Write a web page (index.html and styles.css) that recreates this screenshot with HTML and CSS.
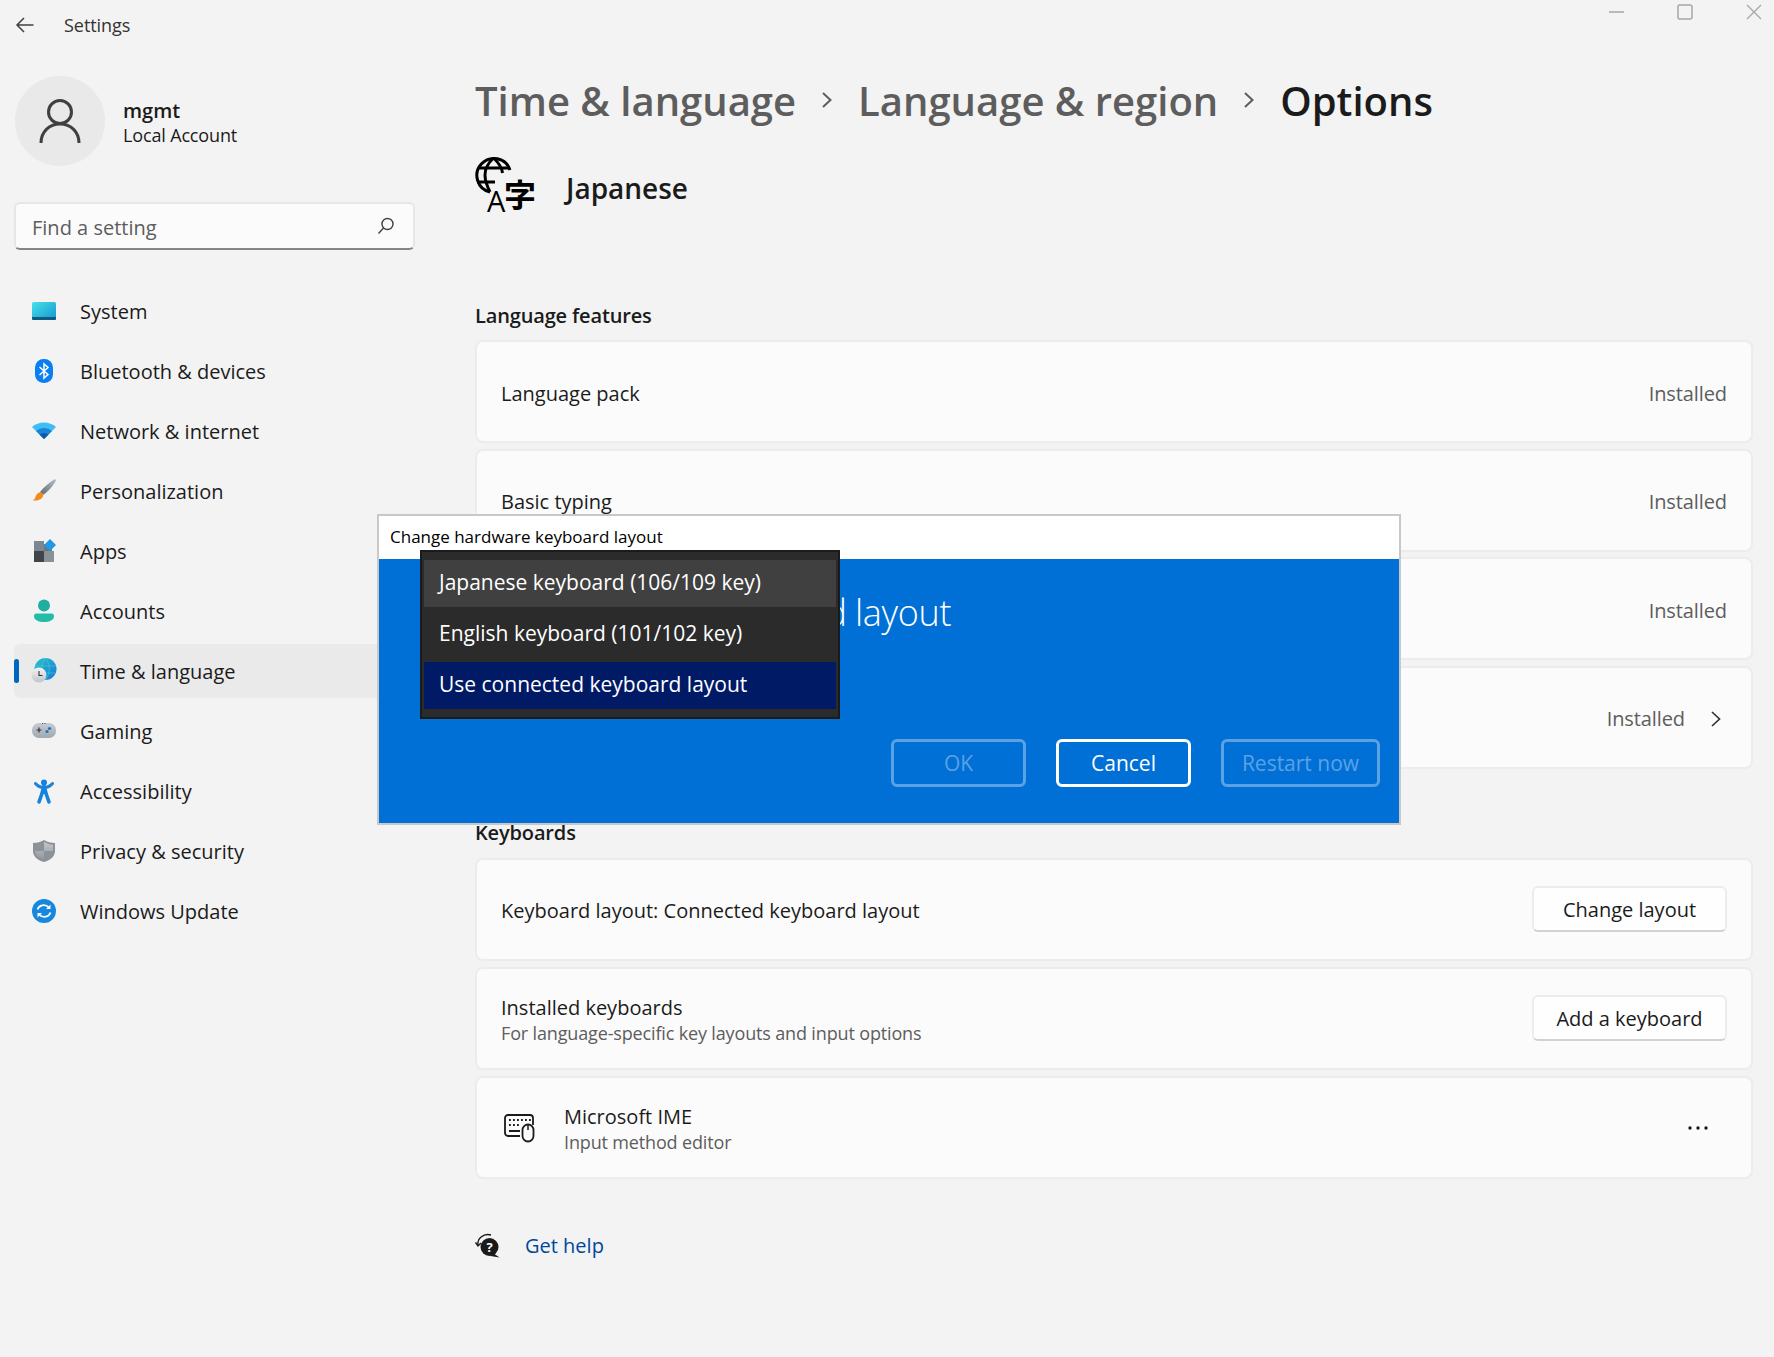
FILE: index.html
```html
<!DOCTYPE html>
<html lang="en">
<head>
    <meta charset="UTF-8">
    <title>Settings</title>
    <link rel="stylesheet" href="styles.css">
</head>
<body>
    <div class="window">
        <header class="titlebar">
            <svg class="back-icon" width="20" height="18" viewBox="0 0 20 18"><path d="M18.5 9H2M9 2 2 9l7 7" fill="none" stroke="#404040" stroke-width="1.5"/></svg>
            <span class="app-title">Settings</span>
            <div class="window-controls">
                <svg width="16" height="16" viewBox="0 0 16 16"><path d="M1 8h15" stroke="#a6a6a6" stroke-width="1.5"/></svg>
                <svg width="16" height="16" viewBox="0 0 16 16"><rect x="1" y="1" width="14" height="14" rx="2" fill="none" stroke="#a6a6a6" stroke-width="1.5"/></svg>
                <svg width="16" height="16" viewBox="0 0 16 16"><path d="M1 1l14 14M15 1 1 15" stroke="#a6a6a6" stroke-width="1.3"/></svg>
            </div>
        </header>

        <div class="app">
            <aside class="sidebar">
                <div class="profile">
                    <div class="avatar">
                        <svg width="44" height="48" viewBox="0 0 44 48"><circle cx="22" cy="15" r="11.5" fill="none" stroke="#404040" stroke-width="3"/><path d="M3 46c0-11 8-19 19-19s19 8 19 19" fill="none" stroke="#404040" stroke-width="3"/></svg>
                    </div>
                    <div class="profile-text">
                        <div class="profile-name">mgmt</div>
                        <div class="profile-type">Local Account</div>
                    </div>
                </div>

                <div class="search">
                    <span class="search-text">Find a setting</span>
                    <svg width="18" height="18" viewBox="0 0 18 18"><circle cx="10.5" cy="7" r="5.5" fill="none" stroke="#404040" stroke-width="1.4"/><path d="M6.5 11 1.5 16.5" stroke="#404040" stroke-width="1.4"/></svg>
                </div>

                <nav class="nav">
                    <a class="nav-item">
                        <svg class="nav-icon" viewBox="0 0 28 28"><defs><linearGradient id="sysG" x1="0" y1="0" x2="1" y2="1"><stop offset="0" stop-color="#46e0ea"/><stop offset="1" stop-color="#1596cf"/></linearGradient></defs><rect x="2" y="5" width="24" height="18" rx="1.5" fill="url(#sysG)"/><path d="M2 20h24v1.5a1.5 1.5 0 0 1-1.5 1.5h-21A1.5 1.5 0 0 1 2 21.500z" fill="#0f5a80"/></svg>
                        System
                    </a>
                    <a class="nav-item">
                        <svg class="nav-icon" viewBox="0 0 28 28"><rect x="5" y="2" width="18" height="24" rx="8.500" fill="#0a7ff2"/><path d="M9.500 10 18 17.500 14 21V7l4 3.500L9.500 18" fill="none" stroke="#fff" stroke-width="1.5"/></svg>
                        Bluetooth &amp; devices
                    </a>
                    <a class="nav-item">
                        <svg class="nav-icon" viewBox="0 0 28 28"><path d="M2 10C8 4 20 4 26 10L14 22z" fill="#3fbdf6"/><path d="M6 14c5-4 11-4 16 0l-8 8z" fill="#1c84d8"/><path d="M9.500 17.500c3-2 6-2 9 0L14 22z" fill="#0e5aa6"/></svg>
                        Network &amp; internet
                    </a>
                    <a class="nav-item">
                        <svg class="nav-icon" viewBox="0 0 28 28"><defs><linearGradient id="brushG" x1="0" y1="1" x2="1" y2="0"><stop offset="0" stop-color="#5f6a74"/><stop offset="1" stop-color="#b6bec6"/></linearGradient></defs><path d="M24 2.500c1-.8 2.500.3 1.800 1.600C23 9 18 15 13 18l-3-3c4-5 9.500-9.500 14-12.500z" fill="url(#brushG)"/><path d="M9.500 15.500c2-.8 4 1 3.500 3.500-.7 3-4.500 5-10.500 4.500 2-1 2.800-2.500 3.300-4.300.4-1.600 2-3.100 3.700-3.700z" fill="#f28a1c"/></svg>
                        Personalization
                    </a>
                    <a class="nav-item">
                        <svg class="nav-icon" viewBox="0 0 28 28"><rect x="4" y="4" width="10" height="10" fill="#7b8891"/><rect x="4" y="14" width="10" height="11" fill="#3f4549"/><rect x="14" y="14" width="10" height="11" fill="#8a9299"/><rect x="14" y="7" width="8" height="7" fill="#6b7780"/><path d="M20 2l6 6-6 6-6-6z" fill="#1f9ae8"/></svg>
                        Apps
                    </a>
                    <a class="nav-item">
                        <svg class="nav-icon" viewBox="0 0 28 28"><circle cx="14" cy="8.500" r="6" fill="#1fae9f"/><path d="M4 19c0-1.500 1-2.500 2.500-2.500h15c1.500 0 2.500 1 2.500 2.500 0 4-4.500 6-10 6S4 23 4 19z" fill="#22bda8"/></svg>
                        Accounts
                    </a>
                    <a class="nav-item selected">
                        <svg class="nav-icon" viewBox="0 0 28 28"><defs><linearGradient id="globeG" x1="0" y1="0" x2="1" y2="1"><stop offset="0" stop-color="#2cc4c9"/><stop offset="1" stop-color="#1479d8"/></linearGradient><linearGradient id="clockG" x1="0" y1="0" x2="0" y2="1"><stop offset="0" stop-color="#f4f4f4"/><stop offset="1" stop-color="#bfc4c8"/></linearGradient></defs><circle cx="15.500" cy="12" r="11" fill="url(#globeG)"/><path d="M5 9h21M6 16h19M15.500 1c-5 6-5 16 0 22M15.500 1c5 6 5 16 0 22" fill="none" stroke="#58cfd8" stroke-width=".5"/><circle cx="9" cy="18" r="7.500" fill="url(#clockG)"/><path d="M9 14v4.500h3.500" fill="none" stroke="#333" stroke-width="1.1"/></svg>
                        Time &amp; language
                    </a>
                    <a class="nav-item">
                        <svg class="nav-icon" viewBox="0 0 28 28"><defs><linearGradient id="padG" x1="0" y1="0" x2="0" y2="1"><stop offset="0" stop-color="#c6ccd2"/><stop offset="1" stop-color="#a0a8b0"/></linearGradient></defs><rect x="2" y="6" width="24" height="15" rx="7" fill="url(#padG)"/><path d="M6.500 13h5M9 10.500v5" stroke="#333" stroke-width="1.200"/><circle cx="19.500" cy="11.500" r="1.600" fill="#1a72c8"/><circle cx="17" cy="14.500" r="1.600" fill="#1a72c8"/><path d="M12 6.500h1M14.500 6.500h1" stroke="#555" stroke-width="1"/></svg>
                        Gaming
                    </a>
                    <a class="nav-item">
                        <svg class="nav-icon" viewBox="0 0 28 28"><circle cx="14" cy="5.500" r="3" fill="#1782dc"/><path d="M5.500 6.500C8 9.500 11 10.500 14 10.500s6-1 8.500-4" fill="none" stroke="#1782dc" stroke-width="3" stroke-linecap="round"/><path d="M14 9c-1.500 6-3 11-5 16M14 9c1.500 6 3 11 5 16" fill="none" stroke="#1782dc" stroke-width="3.500" stroke-linecap="round"/><path d="M11.500 10h5v7h-5z" fill="#1782dc"/></svg>
                        Accessibility
                    </a>
                    <a class="nav-item">
                        <svg class="nav-icon" viewBox="0 0 28 28"><defs><linearGradient id="shieldG" x1="0" y1="0" x2="0" y2="1"><stop offset="0" stop-color="#c4c8cc"/><stop offset="1" stop-color="#8f959b"/></linearGradient></defs><path d="M14 3c3 2 7 3 11 3v8c0 5-4 9-11 11C7 23 3 19 3 14V6c4 0 8-1 11-3z" fill="#8b9298"/><path d="M14 5c3 1.700 6 2.500 9 2.700V14H14zM14 14H5c.3 4 3.500 7 9 9z" fill="url(#shieldG)"/></svg>
                        Privacy &amp; security
                    </a>
                    <a class="nav-item">
                        <svg class="nav-icon" viewBox="0 0 28 28"><circle cx="14" cy="14" r="12" fill="#1588de"/><path d="M7.500 12.500C9 8 15 6.500 19 10.500M20.500 15.500C19 20 13 21.500 9 17.500" fill="none" stroke="#fff" stroke-width="1.700"/><path d="M20.500 7.500v4.500H16zM7.500 20.500V16H12z" fill="#fff"/></svg>
                        Windows Update
                    </a>
                </nav>
            </aside>

            <main class="content">
                <h1 class="breadcrumb">
                    <span>Time &amp; language</span>
                    <svg width="12" height="18" viewBox="0 0 12 18"><path d="M2 2l7.500 7L2 16" fill="none" stroke="#5d5d5d" stroke-width="2"/></svg>
                    <span>Language &amp; region</span>
                    <svg width="12" height="18" viewBox="0 0 12 18"><path d="M2 2l7.500 7L2 16" fill="none" stroke="#5d5d5d" stroke-width="2"/></svg>
                    <span class="current">Options</span>
                </h1>

                <div class="lang-head">
                    <svg class="lang-icon" width="62" height="60" viewBox="0 0 62 60">
                        <path d="M35 15A17 17 0 1 0 15 37" fill="none" stroke="#000" stroke-width="3"/>
                        <path d="M3 13H35M2 27H20M18.500 3C12 9 10 15 10 20c0 5 2 11 5 17M18.500 3C25 9 27 14 27.500 18" fill="none" stroke="#000" stroke-width="3"/>
                        <text x="12" y="57" class="icon-letter">A</text>
                        <text x="29" y="52" class="icon-kanji">字</text>
                    </svg>
                    <span class="lang-name">Japanese</span>
                </div>

                <h2 class="section-title first">Language features</h2>
                <section class="cards features">
                    <div class="card"><span>Language pack</span><span class="status">Installed</span></div>
                    <div class="card"><span>Basic typing</span><span class="status">Installed</span></div>
                    <div class="card"><span class="status">Installed</span></div>
                    <div class="card">
                        <span class="status">Installed</span>
                        <svg class="row-chevron" width="12" height="18" viewBox="0 0 12 18"><path d="M2 2l7.500 7L2 16" fill="none" stroke="#333" stroke-width="1.700"/></svg>
                    </div>
                </section>

                <h2 class="section-title">Keyboards</h2>
                <section class="cards keyboards">
                    <div class="card">
                        <span>Keyboard layout: Connected keyboard layout</span>
                        <button class="btn">Change layout</button>
                    </div>
                    <div class="card">
                        <div>
                            <div>Installed keyboards</div>
                            <div class="sub">For language-specific key layouts and input options</div>
                        </div>
                        <button class="btn">Add a keyboard</button>
                    </div>
                    <div class="card start">
                        <svg class="ime-icon" width="32" height="30" viewBox="0 0 32 30">
                            <path d="M17 23H5a3 3 0 0 1-3-3V5a3 3 0 0 1 3-3h22a3 3 0 0 1 3 3v7" fill="none" stroke="#1a1a1a" stroke-width="1.800"/>
                            <path d="M6 7h1.800M10 7h1.800M14 7h1.800M18 7h1.800M22 7h1.800M26 7h1.800M6 12h1.800M10 12h1.800M14 12h1.800M6 18h11" stroke="#1a1a1a" stroke-width="1.800"/>
                            <rect x="19.500" y="11.500" width="11" height="17" rx="5.500" fill="#fbfbfb" stroke="#1a1a1a" stroke-width="1.800"/>
                            <path d="M25 12v5" stroke="#1a1a1a" stroke-width="1.500"/>
                        </svg>
                        <div>
                            <div>Microsoft IME</div>
                            <div class="sub">Input method editor</div>
                        </div>
                        <svg class="more-icon" width="22" height="6" viewBox="0 0 22 6"><circle cx="3" cy="3" r="1.700" fill="#1a1a1a"/><circle cx="11" cy="3" r="1.700" fill="#1a1a1a"/><circle cx="19" cy="3" r="1.700" fill="#1a1a1a"/></svg>
                    </div>
                </section>

                <div class="help">
                    <svg width="26" height="26" viewBox="0 0 26 26">
                        <path d="M3 13C2 7 8 1 16 3" fill="none" stroke="#1a1a1a" stroke-width="1.400"/>
                        <path d="M.5 10.500 3 14l3-3" fill="none" stroke="#1a1a1a" stroke-width="1.400"/>
                        <circle cx="14.500" cy="15" r="9" fill="#1a1a1a"/>
                        <path d="M18 21l6.500 4.500-9-1.500z" fill="#1a1a1a"/>
                        <text x="14.500" y="19.500" class="help-mark">?</text>
                    </svg>
                    <a class="help-link">Get help</a>
                </div>
            </main>
        </div>

        <div class="dialog">
            <div class="dialog-title">Change hardware keyboard layout</div>
            <div class="dialog-body">
                <div class="dialog-heading"><span class="heading-start">Change hardware keyboard</span> layout</div>
                <div class="dialog-actions">
                    <button class="dialog-btn disabled ok">OK</button>
                    <button class="dialog-btn cancel">Cancel</button>
                    <button class="dialog-btn disabled restart">Restart now</button>
                </div>
            </div>
            <ul class="dropdown">
                <li class="hover">Japanese keyboard (106/109 key)</li>
                <li class="middle">English keyboard (101/102 key)</li>
                <li class="active">Use connected keyboard layout</li>
            </ul>
        </div>
    </div>
</body>
</html>
```

FILE: styles.css
```css
* {
    margin: 0;
    padding: 0;
    box-sizing: border-box;
}
body {
    background: #f3f3f3;
    color: #1b1b1b;
    font-family: "Open Sans", "Noto Sans", sans-serif;
    font-size: 20px;
    overflow: hidden;
}
.window {
    position: relative;
    width: 1774px;
    height: 1357px;
}

/* title bar */
.titlebar {
    display: flex;
    align-items: center;
    height: 50px;
    padding-left: 15px;
}
.app-title {
    margin-left: 29px;
    font-size: 18px;
    letter-spacing: -0.05px;
    color: #333;
}
.window-controls {
    display: flex;
    gap: 53px;
    margin-left: auto;
    margin-right: 12px;
    margin-bottom: 26px;
}

.app {
    display: flex;
}

/* sidebar */
.sidebar {
    flex: 0 0 475px;
    padding-left: 14px;
}
.profile {
    display: flex;
    align-items: center;
    margin-top: 26px;
    padding-left: 1px;
}
.avatar {
    display: flex;
    align-items: center;
    justify-content: center;
    width: 90px;
    height: 90px;
    border-radius: 50%;
    background: #e9e9e9;
}
.profile-text {
    margin-left: 18px;
    padding-top: 1px;
}
.profile-name {
    font-weight: 600;
    line-height: 28px;
}
.profile-type {
    font-size: 18px;
    letter-spacing: -0.15px;
    line-height: 21px;
}
.search {
    display: flex;
    align-items: center;
    justify-content: space-between;
    width: 401px;
    height: 48px;
    margin-top: 36px;
    padding: 0 18px 0 16px;
    background: #fbfbfb;
    border: 2px solid #e6e6e6;
    border-bottom-color: #858585;
    border-radius: 6px;
    color: #5d5d5d;
}
.search-text {
    padding-top: 2px;
}
.nav {
    display: flex;
    flex-direction: column;
    gap: 6px;
    width: 440px;
    margin-top: 34px;
}
.nav-item {
    display: flex;
    align-items: center;
    position: relative;
    height: 54px;
    padding-left: 16px;
    border-radius: 6px;
}
.nav-item.selected {
    background: #eaeaea;
}
.nav-item.selected::before {
    content: "";
    position: absolute;
    left: 0;
    top: 15px;
    width: 5px;
    height: 24px;
    border-radius: 3px;
    background: #0067c0;
}
.nav-icon {
    flex: none;
    width: 28px;
    height: 28px;
    margin-right: 22px;
}

/* content */
.content {
    flex: 1;
    padding-right: 21px;
}
.breadcrumb {
    display: flex;
    align-items: center;
    gap: 25px;
    height: 56px;
    margin-top: 22px;
    font-size: 40px;
    font-weight: 600;
    color: #5d5d5d;
}
.breadcrumb .current {
    color: #1b1b1b;
}
.lang-head {
    display: flex;
    align-items: center;
    gap: 29px;
    height: 60px;
    margin-top: 27px;
}
.lang-name {
    padding-top: 5px;
    font-size: 28px;
    font-weight: 600;
}
.lang-icon {
    overflow: visible;
}
.icon-letter {
    font-size: 29px;
    font-family: "Open Sans", sans-serif;
    font-weight: 500;
}
.icon-kanji {
    font-size: 32px;
    font-family: "Noto Sans CJK JP", sans-serif;
    font-weight: 700;
}
.section-title {
    height: 30px;
    margin-top: 49.5px;
    font-size: 20px;
    font-weight: 600;
    letter-spacing: -0.15px;
    line-height: 30px;
}
.section-title.first {
    margin-top: 86px;
}
.cards {
    display: flex;
    flex-direction: column;
    gap: 5.5px;
    margin-top: 9px;
}
.cards.keyboards {
    gap: 6px;
    margin-top: 10px;
}
.card {
    display: flex;
    align-items: center;
    justify-content: space-between;
    height: 103px;
    padding: 1px 24px 0;
    background: #fbfbfb;
    border: 2px solid #ececec;
    border-radius: 8px;
}
.features .card {
    padding-top: 3px;
}
.card.start {
    justify-content: flex-start;
}
.status {
    margin-left: auto;
    letter-spacing: -0.1px;
    color: #5d5d5d;
}
.row-chevron {
    margin-left: 25px;
    margin-right: 5px;
}
.sub {
    font-size: 18px;
    letter-spacing: -0.15px;
    color: #5d5d5d;
}
.btn {
    width: 195px;
    height: 46px;
    margin-top: -2px;
    background: #fefefe;
    border: 2px solid #ececec;
    border-bottom-color: #d2d2d2;
    border-radius: 6px;
    font: inherit;
    color: #1b1b1b;
}
.ime-icon {
    margin-left: 2px;
    margin-right: 29px;
}
.more-icon {
    margin-left: auto;
    margin-right: 18px;
}
.help {
    display: flex;
    align-items: center;
    gap: 24px;
    height: 30px;
    margin-top: 51px;
}
.help-mark {
    font-size: 13px;
    font-weight: 700;
    fill: #fff;
    text-anchor: middle;
}
.help-link {
    color: #00479c;
}

/* dialog window on top of the settings page */
.dialog {
    position: absolute;
    left: 377px;
    top: 514px;
    width: 1024px;
    height: 311px;
    background: #fff;
    border: 2px solid #c8c8c8;
}
.dialog-title {
    height: 43px;
    padding: 9px 0 0 11px;
    font-size: 17px;
    line-height: 24px;
    color: #000;
}
.dialog-body {
    height: 264px;
    padding: 30px 19px 0 46px;
    background: #0070d6;
    color: #fff;
}
.dialog-heading {
    font-size: 36px;
    font-weight: 300;
    line-height: 48px;
    letter-spacing: -0.3px;
    white-space: nowrap;
}
.heading-start {
    letter-spacing: -1.07px;
}
.dialog-actions {
    display: flex;
    justify-content: flex-end;
    gap: 30px;
    margin-top: 102px;
}
.dialog-btn {
    width: 135px;
    height: 48px;
    background: transparent;
    border: 3px solid #fff;
    border-radius: 6px;
    font: inherit;
    font-size: 21px;
    color: #fff;
}
.dialog-btn.disabled {
    border-color: #5ba2e4;
    color: #5ba2e4;
}
.dialog-btn.restart {
    width: 159px;
}
.dropdown {
    position: absolute;
    left: 41px;
    top: 34px;
    width: 420px;
    height: 169px;
    padding: 8px 2px;
    background: #2b2b2b;
    border: 2px solid #1b1b1b;
    list-style: none;
    font-size: 21px;
    color: #fff;
}
.dropdown li {
    display: flex;
    align-items: center;
    height: 47px;
    padding: 0 0 4px 15px;
}
.dropdown .middle {
    height: 55px;
}
.dropdown .hover {
    background: #404040;
}
.dropdown .active {
    background: #001a66;
}
```
